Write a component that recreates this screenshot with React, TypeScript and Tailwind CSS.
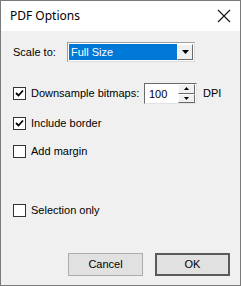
import React, { useState } from 'react';

const Check: React.FC<{ checked: boolean; onToggle: () => void; label: string }> = ({ checked, onToggle, label }) => (
  <label className="flex items-center gap-[5px] cursor-default select-none" onClick={onToggle}>
    <span className="w-[13px] h-[13px] border border-[#333333] bg-white flex items-center justify-center">
      {checked && (
        <svg width="9" height="9" viewBox="0 0 9 9">
          <path d="M1 4 L3.5 6.5 L8 1.5" stroke="#000" strokeWidth="1.8" fill="none" />
        </svg>
      )}
    </span>
    <span>{label}</span>
  </label>
);

export default function App() {
  const [downsample, setDownsample] = useState(true);
  const [border, setBorder] = useState(true);
  const [margin, setMargin] = useState(false);
  const [selection, setSelection] = useState(false);
  const [dpi, setDpi] = useState(100);

  return (
    <div
      className="w-[241px] h-[286px] flex flex-col border border-[#7a7a7a] text-[11px] text-black"
      style={{ fontFamily: '"Liberation Sans", Arial, sans-serif' }}
    >
      {/* title bar */}
      <div className="h-[30px] bg-white flex items-center justify-between pl-[9px] pr-[8px]">
        <span className="text-[12px]" style={{ fontFamily: '"Noto Sans", "Open Sans", sans-serif' }}>
          PDF Options
        </span>
        <svg width="14" height="14" viewBox="0 0 14 14" className="mr-[1px]">
          <path d="M1 1 L13 13 M13 1 L1 13" stroke="#111" strokeWidth="1.1" />
        </svg>
      </div>

      <div className="flex-1 bg-[#f0f0f0] flex flex-col pl-[12px]">
        {/* scale to */}
        <div className="mt-[11px] h-[20px] flex items-center">
          <span className="w-[54px]">Scale to:</span>
          <div className="w-[128px] h-[20px] bg-white border border-t-[#a0a0a0] border-l-[#a0a0a0] border-b-[#dcdcdc] border-r-[#dcdcdc] flex items-center p-[1px]">
            <div className="flex-1 h-full bg-[#0078d7] text-white flex items-center pl-[2px]">Full Size</div>
            <div className="w-[16px] h-full bg-[#f0f0f0] border border-t-white border-l-white border-b-[#696969] border-r-[#696969] flex items-center justify-center">
              <svg width="7" height="4" viewBox="0 0 7 4">
                <path d="M0 0 H7 L3.5 4 Z" fill="#000" />
              </svg>
            </div>
          </div>
        </div>

        {/* downsample */}
        <div className="mt-[21px] h-[21px] flex items-center">
          <div className="w-[131px]">
            <Check checked={downsample} onToggle={() => setDownsample(!downsample)} label="Downsample bitmaps:" />
          </div>
          <div className="w-[53px] h-[21px] bg-white border border-t-[#696969] border-l-[#696969] border-b-[#e3e3e3] border-r-[#e3e3e3] flex items-center">
            <input
              value={dpi}
              onChange={(e) => setDpi(Number(e.target.value) || 0)}
              className="w-[33px] h-full pl-[4px] outline-none bg-transparent text-[11px]"
            />
            <div className="flex flex-col w-[17px] h-[19px]">
              <button onClick={() => setDpi(dpi + 1)} className="flex-1 bg-[#f0f0f0] border border-t-white border-l-white border-b-[#696969] border-r-[#696969] flex items-center justify-center">
                <svg width="5" height="3" viewBox="0 0 5 3"><path d="M0 3 H5 L2.5 0 Z" fill="#000" /></svg>
              </button>
              <button onClick={() => setDpi(dpi - 1)} className="flex-1 bg-[#f0f0f0] border border-t-white border-l-white border-b-[#696969] border-r-[#696969] flex items-center justify-center">
                <svg width="5" height="3" viewBox="0 0 5 3"><path d="M0 0 H5 L2.5 3 Z" fill="#000" /></svg>
              </button>
            </div>
          </div>
          <span className="ml-[6px]">DPI</span>
        </div>

        <div className="mt-[13px] h-[13px] flex items-center">
          <Check checked={border} onToggle={() => setBorder(!border)} label="Include border" />
        </div>
        <div className="mt-[15px] h-[13px] flex items-center">
          <Check checked={margin} onToggle={() => setMargin(!margin)} label="Add margin" />
        </div>
        <div className="mt-[46px] h-[13px] flex items-center">
          <Check checked={selection} onToggle={() => setSelection(!selection)} label="Selection only" />
        </div>

        {/* buttons */}
        <div className="mt-[36px] flex gap-[12px] pl-[55px]">
          <button className="w-[75px] h-[23px] bg-[#e1e1e1] border border-[#adadad]">Cancel</button>
          <button className="w-[75px] h-[23px] bg-[#e1e1e1] border-2 border-[#5a5a5a]">OK</button>
        </div>
      </div>
    </div>
  );
}
